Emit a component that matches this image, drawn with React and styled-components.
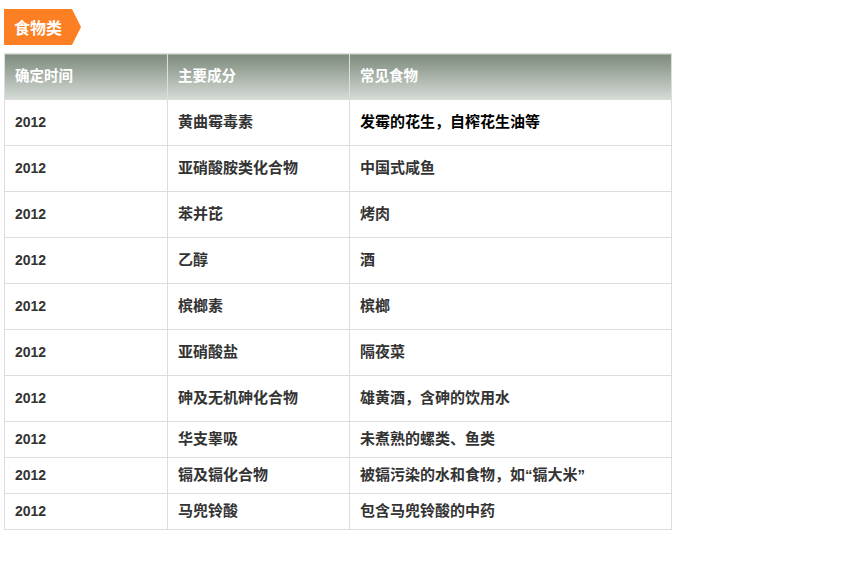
import React from 'react'
import styled, { createGlobalStyle } from 'styled-components'

const GlobalStyle = createGlobalStyle`
    html, body {
        margin: 0;
        padding: 0;
        background: #fff;
    }
    body {
        font-family: "Liberation Sans", "Noto Sans CJK SC", sans-serif;
    }
`

const rows = [
    { year: '2012', agent: '黄曲霉毒素', food: '发霉的花生，自榨花生油等', strong: true },
    { year: '2012', agent: '亚硝酸胺类化合物', food: '中国式咸鱼' },
    { year: '2012', agent: '苯并芘', food: '烤肉' },
    { year: '2012', agent: '乙醇', food: '酒' },
    { year: '2012', agent: '槟榔素', food: '槟榔' },
    { year: '2012', agent: '亚硝酸盐', food: '隔夜菜' },
    { year: '2012', agent: '砷及无机砷化合物', food: '雄黄酒，含砷的饮用水' },
    { year: '2012', agent: '华支睾吸', food: '未煮熟的螺类、鱼类', compact: true },
    { year: '2012', agent: '镉及镉化合物', food: '被镉污染的水和食物，如“镉大米”', compact: true },
    { year: '2012', agent: '马兜铃酸', food: '包含马兜铃酸的中药', compact: true },
]

const Page = styled.div`
    padding: 9px 0 0 4px;
`

const Tag = styled.div`
    display: inline-flex;
    align-items: center;
    height: 36px;
    padding: 0 18px 0 10px;
    background: #fd7f23;
    color: #fff;
    font-size: 16px;
    font-weight: bold;
    clip-path: polygon(0 0, 68px 0, 77px 50%, 68px 100%, 0 100%);
    width: 49px;
`

const Table = styled.table`
    margin-top: 8px;
    width: 668px;
    border-collapse: collapse;
    font-size: 15px;
    line-height: 18px;
    font-weight: bold;
    color: #333;
`

const HeadCell = styled.th`
    height: 43px;
    padding: 0 0 2px 10px;
    text-align: left;
    color: #fff;
    font-size: 14.5px;
    font-weight: bold;
    background: linear-gradient(to bottom, #7c8a7c, #d6dbd6);
    border: 1px solid #ddd;
    width: ${p => p.$w}px;
`

const Cell = styled.td`
    height: ${p => (p.$compact ? 33 : 43)}px;
    padding: 0 0 2px 10px;
    border: 1px solid #ddd;
    color: ${p => (p.$strong ? '#000' : '#333')};
`

const Year = styled.span`
    font-size: 14px;
`

export default function App() {
    return (
        <Page>
            <GlobalStyle />
            <Tag>食物类</Tag>
            <Table>
                <thead>
                    <tr>
                        <HeadCell $w={152}>确定时间</HeadCell>
                        <HeadCell $w={171}>主要成分</HeadCell>
                        <HeadCell>常见食物</HeadCell>
                    </tr>
                </thead>
                <tbody>
                    {rows.map((r, i) => (
                        <tr key={i}>
                            <Cell $compact={r.compact}><Year>{r.year}</Year></Cell>
                            <Cell $compact={r.compact}>{r.agent}</Cell>
                            <Cell $compact={r.compact} $strong={r.strong}>{r.food}</Cell>
                        </tr>
                    ))}
                </tbody>
            </Table>
        </Page>
    )
}
